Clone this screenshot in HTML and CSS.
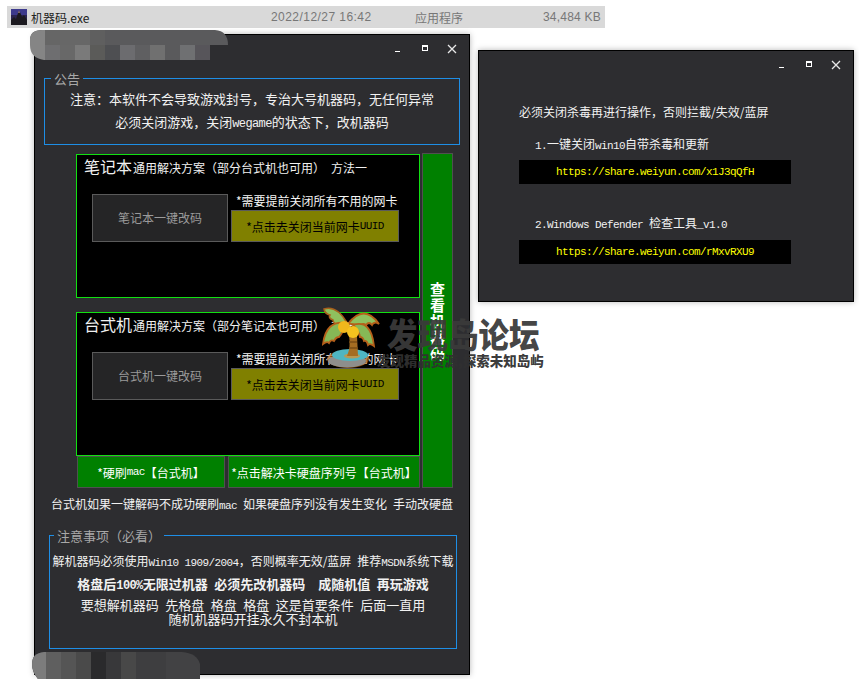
FILE: index.html
```html
<!DOCTYPE html>
<html lang="zh">
<head>
<meta charset="utf-8">
<title>机器码</title>
<link rel="stylesheet" href="styles.css">
</head>
<body>
<div class="desktop">
  <div class="filerow">
    <svg class="fileicon" viewBox="0 0 16 16"><rect width="16" height="16" fill="#2b2550"/><rect y="0" width="16" height="6" fill="#3d3a8c"/><path d="M0 16V11L3 8 5 10 7 4 9 3 11 8 13 6 16 11V16Z" fill="#1c1a20"/><path d="M7 4L8 1 9 4Z" fill="#8a7060"/></svg>
    <span class="filename">机器码.exe</span>
    <span class="filedate">2022/12/27 16:42</span>
    <span class="filetype">应用程序</span>
    <span class="filesize">34,484 KB</span>
  </div>

  <section class="window win-main">
    <div class="titlebar">
      <svg class="ctl" viewBox="0 0 12 10"><rect x="3" y="7" width="5" height="1" fill="#fff"/></svg>
      <svg class="ctl" viewBox="0 0 12 10"><path d="M3 1H9V7H3ZM4 3V6H8V3Z" fill="#fff" fill-rule="evenodd"/></svg>
      <svg class="ctl" viewBox="0 0 12 10"><path d="M2 1L10 9M10 1L2 9" stroke="#e8e8e8" stroke-width="1.3"/></svg>
    </div>

    <fieldset class="group group-notice">
      <legend>公告</legend>
      <p class="notice-line">注意：本软件不会导致游戏封号，专治大号机器码，无任何异常</p>
      <p class="notice-line">必须关闭游戏，关闭<span class="lat lat-wide">wegame</span>的状态下，改机器码</p>
    </fieldset>

    <div class="workspace">
      <div class="stack">
        <div class="panel">
          <div class="panel-title"><span class="big">笔记本</span>通用解决方案（部分台式机也可用）&ensp;方法一</div>
          <div class="panel-row">
            <div class="btn-dark">笔记本一键改码</div>
            <div class="panel-side">
              <div class="side-note">*需要提前关闭所有不用的网卡</div>
              <div class="btn-olive">*点击去关闭当前网卡<span class="lat">UUID</span></div>
            </div>
          </div>
        </div>
        <div class="panel panel-second">
          <div class="panel-title"><span class="big">台式机</span>通用解决方案（部分笔记本也可用）&ensp;方法一</div>
          <div class="panel-row">
            <div class="btn-dark">台式机一键改码</div>
            <div class="panel-side">
              <div class="side-note">*需要提前关闭所有不用的网卡</div>
              <div class="btn-olive">*点击去关闭当前网卡<span class="lat">UUID</span></div>
            </div>
          </div>
        </div>
        <div class="green-row">
          <div class="btn-green btn-mac">*硬刷<span class="lat">mac</span>【台式机】</div>
          <div class="btn-green btn-disk">*点击解决卡硬盘序列号【台式机】</div>
        </div>
      </div>
      <div class="btn-side"><span class="side-text">查看机器码</span></div>
    </div>

    <p class="hint">台式机如果一键解码不成功硬刷<span class="lat">mac</span>&ensp;如果硬盘序列没有发生变化&ensp;手动改硬盘</p>

    <fieldset class="group group-rules">
      <legend>注意事项（必看）</legend>
      <p class="rule-first">解机器码必须使用<span class="lat">Win10 1909/2004</span>，否则概率无效/蓝屏&ensp;推荐<span class="lat">MSDN</span>系统下载</p>
      <p class="rule-bold">格盘后<span class="lat lat-wide">100%</span>无限过机器&ensp;必须先改机器码&ensp;&ensp;成随机值&ensp;再玩游戏</p>
      <p class="rule-last">要想解机器码&ensp;先格盘&ensp;格盘&ensp;格盘&ensp;这是首要条件&ensp;后面一直用<br>随机机器码开挂永久不封本机</p>
    </fieldset>
  </section>

  <section class="window win-side">
    <div class="titlebar">
      <svg class="ctl" viewBox="0 0 12 10"><rect x="3" y="7" width="5" height="1" fill="#fff"/></svg>
      <svg class="ctl" viewBox="0 0 12 10"><path d="M3 1H9V7H3ZM4 3V6H8V3Z" fill="#fff" fill-rule="evenodd"/></svg>
      <svg class="ctl" viewBox="0 0 12 10"><path d="M2 1L10 9M10 1L2 9" stroke="#e8e8e8" stroke-width="1.3"/></svg>
    </div>
    <div class="side-body">
      <p class="warn">必须关闭杀毒再进行操作，否则拦截/失效/蓝屏</p>
      <p class="step"><span class="lat">1.</span>一键关闭<span class="lat">win10</span>自带杀毒和更新</p>
      <div class="link">https://share.weiyun.com/x1J3qQfH</div>
      <p class="step step-two"><span class="lat">2.Windows Defender</span>&ensp;检查工具<span class="lat">_v1.0</span></p>
      <div class="link">https://share.weiyun.com/rMxvRXU9</div>
    </div>
  </section>

  <svg class="mosaic mosaic-top" viewBox="0 0 198 30">
    <defs><clipPath id="mt"><path d="M0 10Q0 0 12 0H185Q198 1 198 15H180V30H14Q0 28 0 15Z"/></clipPath></defs>
    <g clip-path="url(#mt)">
      <rect width="198" height="15" fill="#5a5a5c"/>
      <rect width="15" height="30" fill="#858585"/>
      <rect x="15" width="15" height="15" fill="#666"/>
      <rect x="30" width="30" height="15" fill="#676767"/>
      <rect x="60" width="15" height="15" fill="#5f5f5f"/>
      <rect x="15" y="15" width="15" height="15" fill="#6e6e70"/>
      <rect x="30" y="15" width="15" height="15" fill="#686868"/>
      <rect x="45" y="15" width="15" height="15" fill="#7a7a7a"/>
      <rect x="60" y="15" width="15" height="15" fill="#5b5b59"/>
      <rect x="75" y="15" width="15" height="15" fill="#4e4f52"/>
      <rect x="90" y="15" width="15" height="15" fill="#6c6c6f"/>
      <rect x="105" y="15" width="15" height="15" fill="#5f5f61"/>
      <rect x="120" y="15" width="15" height="15" fill="#707070"/>
      <rect x="135" y="15" width="15" height="15" fill="#5a5a5c"/>
      <rect x="150" y="15" width="15" height="15" fill="#6f7072"/>
      <rect x="165" y="15" width="15" height="15" fill="#57555a"/>
    </g>
  </svg>
  <svg class="mosaic mosaic-bottom" viewBox="0 0 168 27">
    <defs><clipPath id="mb"><path d="M0 12Q0 1 12 0H150Q165 1 168 12V27H6Q0 20 0 12Z"/></clipPath></defs>
    <g clip-path="url(#mb)">
      <rect width="168" height="27" fill="#424244"/>
      <rect width="14" height="27" fill="#7c7c7c"/>
      <rect x="14" width="15" height="27" fill="#5f5f5f"/>
      <rect x="29" width="15" height="27" fill="#555"/>
      <rect x="44" width="15" height="27" fill="#4a4a4a"/>
      <rect x="59" width="15" height="27" fill="#2a2a2c"/>
      <rect x="74" width="15" height="27" fill="#38383a"/>
      <rect x="89" width="15" height="27" fill="#484848"/>
      <rect x="104" width="30" height="27" fill="#3e3e40"/>
    </g>
  </svg>

  <div class="watermark">
    <svg class="palm" viewBox="0 0 60 64">
      <ellipse cx="26" cy="53" rx="21" ry="9" fill="#b5651d" opacity=".7"/>
      <ellipse cx="25" cy="55" rx="19" ry="6.5" fill="#8e8e8c"/>
      <ellipse cx="28" cy="49" rx="18" ry="6" fill="#4fb6c2"/>
      <ellipse cx="30" cy="50" rx="8" ry="2.5" fill="#b89a55"/>
      <path d="M27 30Q32 27 35 30L36 50H25Q29 41 27 30Z" fill="#a56d22"/>
      <path d="M27 36H35M27 42H36" stroke="#7a4c14" stroke-width="1.5"/>
      <path d="M25 17Q15 -1 2 3 3 8 8 9 6 12 11 14 11 18 18 19Z" fill="#8fc05e" stroke="#a8601c" stroke-width="1.5"/>
      <path d="M24 17Q4 14 1 38 5 35 7 37 9 33 12 35 14 31 17 31 21 27 24 17Z" fill="#86b856" stroke="#b5601a" stroke-width="1.8"/>
      <path d="M26 18Q42 -3 57 18 52 15 50 19 47 15 44 19 40 16 37 21 33 17 26 18Z" fill="#8fc05e" stroke="#b5601a" stroke-width="1.8"/>
      <path d="M31 19Q49 13 52 40 48 37 46 39 45 34 42 35 41 31 38 31 37 25 31 19Z" fill="#86b856" stroke="#b5601a" stroke-width="1.8"/>
      <circle cx="22" cy="21" r="6" fill="#f0b71c"/>
      <circle cx="31" cy="26" r="6" fill="#f5c21f"/>
    </svg>
    <div class="wm-title">发现岛论坛</div>
    <div class="wm-sub">发现精品资源,探索未知岛屿</div>
  </div>
</div>
</body>
</html>
```
FILE: styles.css
```css
* { box-sizing: border-box; }
html, body { margin: 0; padding: 0; background: #fff; }
body { font-family: "Noto Sans CJK SC", "Liberation Sans", sans-serif; font-size: 12px; color: #fff; }
p { margin: 0; }

.desktop { position: relative; width: 859px; height: 679px; overflow: hidden; }
.lat { font-family: "Liberation Mono", monospace; font-size: 11px; letter-spacing: -.6px; }
.lat-wide { font-size: 12px; letter-spacing: -.6px; }

.filerow {
  position: absolute; left: 7px; top: 6px; width: 598px; height: 22px;
  display: flex; align-items: center; background: #d9d9d9; color: #777; font-size: 12px;
}
.fileicon { width: 16px; height: 16px; margin-left: 4px; flex: none; }
.filename { margin-left: 4px; color: #222; font-family: "Noto Sans CJK SC", sans-serif; width: 240px; flex: none; }
.filedate { width: 144px; flex: none; font-family: "Liberation Sans", sans-serif; letter-spacing: .45px; }
.filetype { width: 128px; flex: none; }
.filesize { font-family: "Liberation Sans", sans-serif; letter-spacing: .2px; }

.window {
  position: absolute; background: #2d2d30; border: 1px solid #000;
  box-shadow: 0 0 6px rgba(0, 0, 0, .28);
}
.win-main { left: 34px; top: 34px; width: 436px; height: 641px; }
.win-side { left: 478px; top: 50px; width: 376px; height: 252px; }

.titlebar { display: flex; justify-content: flex-end; gap: 15px; height: 28px; padding: 9px 11px 0 0; }
.ctl { width: 12px; height: 10px; display: block; }

.group { margin: 0; border: 1px solid #1e8ee6; min-width: 0; text-align: center; }
.group legend { color: #a8a8a8; font-size: 13px; line-height: 17px; padding: 0 3px; margin-left: 2px; text-align: left; }

.group-notice { margin: 7px 9px 0; height: 75px; padding: 0 4px; }
.notice-line { font-size: 13px; line-height: 23px; color: #f2f2f2; }

.workspace { display: flex; gap: 2px; margin: 8px 0 0 41px; }
.stack { width: 344px; padding-top: 1px; display: flex; flex-direction: column; }
.panel { height: 144px; background: #000; border: 1px solid #12e012; padding: 0; }
.panel-second { margin-top: 14px; }
.panel-title { height: 39px; padding: 1px 0 0 7px; font-size: 12px; line-height: 20px; white-space: nowrap; color: #f0f0f0; }
.big { font-size: 16px; margin-right: 1px; }
.panel-row { display: flex; gap: 3px; padding-left: 15px; }
.btn-dark {
  width: 136px; height: 48px; padding-bottom: 2px; display: flex; align-items: center; justify-content: center;
  background: #252526; border: 1px solid #5a5a5a; color: #9a9a9a; font-size: 12px;
}
.panel-side { width: 168px; }
.side-note { height: 16px; line-height: 14px; padding-left: 5px; font-size: 12px; white-space: nowrap; color: #f5f5f5; }
.btn-olive {
  height: 32px; display: flex; align-items: center; justify-content: center;
  background: #808000; border: 1px solid #5a5a5a; color: #000; font-size: 12px;
}

.green-row { display: flex; gap: 3px; padding-left: 1px; height: 32px; }
.btn-green {
  height: 32px; display: flex; align-items: center; justify-content: center;
  background: #008000; border: 1px solid #505050; color: #fff; font-size: 12px; white-space: nowrap;
}
.btn-mac { width: 148px; }
.btn-disk { width: 192px; }

.btn-side {
  width: 31px; height: 335px; display: flex; align-items: center; justify-content: center;
  background: #008000; border: 1px solid #505050;
}
.side-text { width: 15px; font-size: 15px; line-height: 16px; font-weight: 700; color: #fff; text-align: center; word-break: break-all; }

.hint { margin-top: 7px; height: 18px; line-height: 18px; text-align: center; font-size: 12px; color: #f2f2f2; white-space: nowrap; }

.group-rules { margin: 14px 12px 0 14px; height: 122px; padding: 0; color: #f2f2f2; }
.group-rules legend { margin-left: 4px; }
.rule-first { margin-top: 8px; line-height: 18px; font-size: 12px; white-space: nowrap; }
.rule-bold { margin-top: 3px; height: 18px; line-height: 18px; font-size: 13px; font-weight: 700; white-space: nowrap; }
.rule-last { margin-top: 5px; line-height: 14px; font-size: 13px; white-space: nowrap; }

.side-body { padding: 24px 0 0 40px; }
.warn { height: 18px; line-height: 18px; font-size: 12px; color: #f2f2f2; }
.step { margin-top: 14px; height: 18px; line-height: 18px; padding-left: 16px; font-size: 12px; color: #f2f2f2; white-space: nowrap; }
.step-two { margin-top: 31px; line-height: 16px; }
.link {
  width: 272px; height: 24px; margin-top: 7px; padding-left: 37px;
  background: #000; color: #ffff00; font-family: "Liberation Mono", monospace; font-size: 11px; letter-spacing: -.6px; line-height: 24px;
}

.mosaic { position: absolute; display: block; }
.mosaic-top { left: 30px; top: 30px; width: 198px; height: 30px; }
.mosaic-bottom { left: 32px; top: 652px; width: 168px; height: 27px; }

.watermark { position: absolute; left: 322px; top: 306px; width: 230px; height: 66px; }
.palm { position: absolute; left: 0; top: 0; width: 60px; height: 64px; }
.wm-title {
  position: absolute; left: 65px; top: 7px; font-size: 30.5px; line-height: 40px; font-weight: 900;
  color: rgba(58, 58, 58, .95); white-space: nowrap; transform: scaleY(1.12);
}
.wm-sub {
  position: absolute; left: 55px; top: 46px; font-size: 13.5px; line-height: 16px; font-weight: 900;
  color: rgba(48, 48, 48, .95); white-space: nowrap;
}
```
